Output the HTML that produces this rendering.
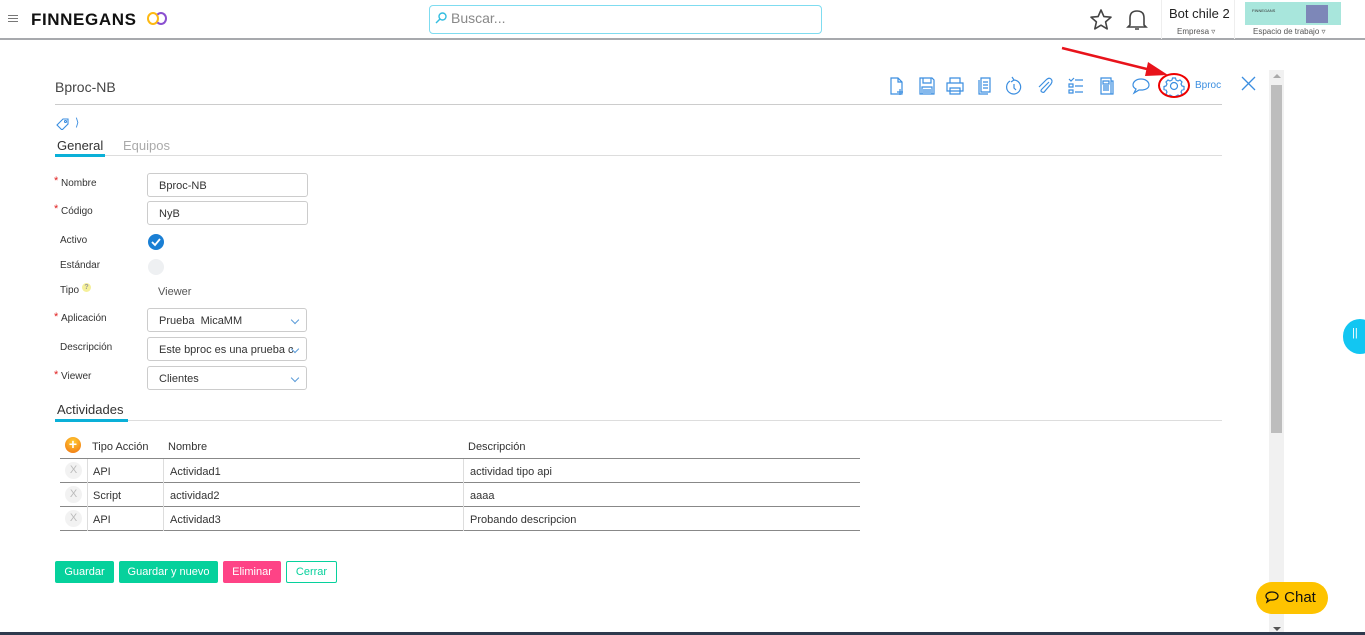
<!DOCTYPE html>
<html><head><meta charset="utf-8">
<style>
*{box-sizing:border-box;margin:0;padding:0}
body{width:1365px;height:635px;overflow:hidden;background:#fff;font-family:"Liberation Sans",sans-serif;position:relative;color:#333}
.a{position:absolute}
.lbl{position:absolute;font-size:10px;color:#333;left:60px}
.req{color:#e02020;position:absolute;left:54px;font-size:11px}
.inp{position:absolute;left:147px;width:161px;height:24px;border:1px solid #ccc;border-radius:3px;font-size:11px;padding:6px 0 0 11px;color:#333}
.sel{position:absolute;left:147px;width:160px;height:24px;border:1px solid #ccc;border-radius:3px;font-size:11px;padding:6px 0 0 11px;color:#333;overflow:hidden;white-space:nowrap}
.sel:after{content:"";position:absolute;right:8px;top:8px;width:5px;height:5px;border-right:1px solid #5a9bd8;border-bottom:1px solid #5a9bd8;transform:rotate(45deg)}
.row{position:absolute;left:60px;width:800px;height:24px;border-bottom:1px solid #888;font-size:11px}
.row span{position:absolute;top:7px}
.x{position:absolute;left:5px;top:3px;width:17px;height:17px;border-radius:50%;background:#f2f2f2;color:#bbb;font-size:11px;text-align:center;line-height:17px}
.btn{position:absolute;top:561px;height:22px;border-radius:2px;color:#fff;font-size:11px;text-align:center;line-height:22px}
.ic{position:absolute;top:76px}
</style></head><body>
<!-- header -->
<div class="a" style="left:0;top:0;width:1365px;height:40px;border-bottom:2px solid #a7a9ad"></div>
<div class="a" style="left:8px;top:15px;width:10px;height:1px;background:#777;box-shadow:0 3px 0 #777,0 6px 0 #777"></div>
<div class="a" style="left:31px;top:10px;font-size:17px;font-weight:bold;letter-spacing:0.6px;color:#111">FINNEGANS</div>
<div class="a" style="left:147px;top:12px;width:12px;height:13px;border-radius:50%;border:2.5px solid #fdb913"></div>
<div class="a" style="left:155px;top:12px;width:12px;height:13px;border-radius:50%;border:2.5px solid #8a4fd0;border-left-color:transparent"></div>
<div class="a" style="left:429px;top:5px;width:393px;height:29px;border:1px solid #7fdcf0;border-radius:4px"></div>
<svg class="a" style="left:434px;top:11px" width="14" height="14"><circle cx="8.5" cy="5.5" r="3.5" fill="none" stroke="#33bde0" stroke-width="1.4"/><path d="M6 8L2 12" stroke="#33bde0" stroke-width="1.4"/></svg>
<div class="a" style="left:451px;top:10px;font-size:14px;color:#888">Buscar...</div>
<svg class="a" style="left:1089px;top:8px" width="24" height="24" viewBox="0 0 24 24"><path d="M12 2l2.9 6.6 7.1.6-5.4 4.7 1.6 7-6.2-3.7-6.2 3.7 1.6-7L2 9.2l7.1-.6z" fill="none" stroke="#444" stroke-width="1.6" stroke-linejoin="round"/></svg>
<svg class="a" style="left:1126px;top:8px" width="22" height="24" viewBox="0 0 22 24"><path d="M4 17 L4 10 Q4 3 11 3 Q18 3 18 10 L18 17 L20 19 L2 19 Z M9 21 L13 21" fill="none" stroke="#444" stroke-width="1.6"/></svg>
<div class="a" style="left:1161px;top:0;width:1px;height:39px;background:#eee"></div>
<div class="a" style="left:1234px;top:0;width:1px;height:39px;background:#eee"></div>
<div class="a" style="left:1169px;top:6px;font-size:13px;color:#222">Bot chile 2</div>
<div class="a" style="left:1177px;top:27px;font-size:8px;color:#555">Empresa ▿</div>
<div class="a" style="left:1245px;top:2px;width:96px;height:23px;background:#a8e6dc"></div>
<div class="a" style="left:1252px;top:8px;font-size:4px;color:#333">FINNEGANS</div>
<div class="a" style="left:1306px;top:5px;width:22px;height:18px;background:#6b5ea8;opacity:.7"></div>
<div class="a" style="left:1253px;top:27px;font-size:8px;color:#555">Espacio de trabajo ▿</div>

<!-- title bar -->
<div class="a" style="left:55px;top:79px;font-size:14px;color:#444">Bproc-NB</div>
<div class="a" style="left:55px;top:104px;width:1167px;height:1px;background:#ccc"></div>
<svg class="ic" style="left:888px" width="18" height="20" viewBox="0 0 18 20" fill="none" stroke="#3b8ee0" stroke-width="1.2"><path d="M3 2h7l4 4v12H3z M10 2v4h4 M12 13v6 M9 16h6"/></svg>
<svg class="ic" style="left:918px" width="18" height="20" viewBox="0 0 18 20" fill="none" stroke="#3b8ee0" stroke-width="1.2"><path d="M2 2h12l2 2v14H2z M5 2v5h8V2 M4 11h10v7H4z M5 14h8 M5 16h8"/></svg>
<svg class="ic" style="left:946px" width="18" height="20" viewBox="0 0 18 20" fill="none" stroke="#3b8ee0" stroke-width="1.2"><path d="M4 2h10v5H4z M1 7h16v8H1z M4 12h10v6H4z"/></svg>
<svg class="ic" style="left:976px" width="18" height="20" viewBox="0 0 18 20" fill="none" stroke="#3b8ee0" stroke-width="1.2"><path d="M5 2h9v14H5z M3 4v14h9 M7 6h5 M7 9h5 M7 12h5"/></svg>
<svg class="ic" style="left:1004px" width="18" height="20" viewBox="0 0 18 20" fill="none" stroke="#3b8ee0" stroke-width="1.2"><path d="M6 5 A7 7 0 1 0 10 4 M8 1 L10 4 L7 6 M10 8v4l2 2"/></svg>
<svg class="ic" style="left:1036px" width="18" height="20" viewBox="0 0 18 20" fill="none" stroke="#3b8ee0" stroke-width="1.2"><path d="M13 6 L6 13 Q4 15 6 16 Q8 17 9 15 L15 8 Q17 5 15 3 Q13 1 10 4 L3 11"/></svg>
<svg class="ic" style="left:1067px" width="18" height="20" viewBox="0 0 18 20" fill="none" stroke="#3b8ee0" stroke-width="1.2"><path d="M2 3l2 2 3-3 M8 4h8 M2 8h4v3H2z M8 10h8 M2 14h4v3H2z M8 16h8"/></svg>
<svg class="ic" style="left:1098px" width="18" height="20" viewBox="0 0 18 20" fill="none" stroke="#3b8ee0" stroke-width="1.2"><path d="M3 2h10v16H3z M13 5h2v13H5 M5 5h6v3H5z M5 10h6 M5 12h6 M5 14h6"/></svg>
<svg class="ic" style="left:1131px" width="20" height="20" viewBox="0 0 20 20" fill="none" stroke="#3b8ee0" stroke-width="1.2"><path d="M10 3C5 3 2 6 2 9c0 2 1 3 3 4l-2 4 5-3c1 0 1 0 2 0 5 0 8-2 8-5s-3-6-8-6z"/></svg>
<svg class="a" style="left:1163px;top:75px" width="22" height="22" viewBox="0 0 22 22" fill="none" stroke="#3b8ee0" stroke-width="1.2"><circle cx="11" cy="11" r="3.5"/><path d="M9.5 3h3l.5 2 2 1 2-1 2 2-1 2 1 2 2 .5v3l-2 .5-1 2 1 2-2 2-2-1-2 1-.5 2h-3l-.5-2-2-1-2 1-2-2 1-2-1-2-2-.5v-3l2-.5 1-2-1-2 2-2 2 1 2-1z"/></svg>
<div class="a" style="left:1158px;top:73px;width:32px;height:25px;border:2.5px solid #e00;border-radius:50%"></div>
<svg class="a" style="left:1060px;top:45px" width="110" height="35"><path d="M2 3 L95 26" stroke="#e8131b" stroke-width="2.5"/><path d="M108 30 L88 17 L85 31z" fill="#e8131b"/></svg>
<div class="a" style="left:1195px;top:80px;font-size:10px;color:#3b8ee0">Bproc</div>
<svg class="a" style="left:1241px;top:76px" width="15" height="15"><path d="M1 1L14 14M14 1L1 14" stroke="#3b8ee0" stroke-width="1.3"/></svg>

<!-- tags/tabs -->
<svg class="a" style="left:56px;top:118px" width="14" height="12" viewBox="0 0 14 12" fill="none" stroke="#3b8ee0" stroke-width="1.1"><path d="M1 7L7 1h5v5L6 12z"/><circle cx="9.5" cy="3.5" r="1"/></svg>
<div class="a" style="left:75px;top:116px;font-size:11px;color:#3b8ee0">⟩</div>
<div class="a" style="left:57px;top:138px;font-size:13px;color:#333">General</div>
<div class="a" style="left:123px;top:138px;font-size:13px;color:#aaa">Equipos</div>
<div class="a" style="left:55px;top:155px;width:1167px;height:1px;background:#ddd"></div>
<div class="a" style="left:55px;top:154px;width:50px;height:3px;background:#0ab0d8"></div>

<!-- form -->
<span class="req" style="top:175px">*</span><div class="lbl" style="top:178px;left:61px">Nombre</div>
<div class="inp" style="top:173px">Bproc-NB</div>
<span class="req" style="top:203px">*</span><div class="lbl" style="top:206px;left:61px">Código</div>
<div class="inp" style="top:201px">NyB</div>
<div class="lbl" style="top:235px">Activo</div>
<div class="a" style="left:148px;top:234px;width:16px;height:16px;border-radius:50%;background:#1a7fd4"></div>
<svg class="a" style="left:148px;top:234px" width="16" height="16"><path d="M4 8l3 3 5-6" fill="none" stroke="#fff" stroke-width="1.8"/></svg>
<div class="lbl" style="top:260px">Estándar</div>
<div class="a" style="left:148px;top:259px;width:16px;height:16px;border-radius:50%;background:#eef0f2"></div>
<div class="lbl" style="top:285px">Tipo</div>
<div class="a" style="left:82px;top:283px;width:9px;height:9px;border-radius:50%;background:#f5f09a;color:#999;font-size:7px;text-align:center;line-height:9px;font-weight:bold">?</div>
<div class="a" style="left:158px;top:286px;font-size:11px;color:#555">Viewer</div>
<span class="req" style="top:311px">*</span><div class="lbl" style="top:313px;left:61px">Aplicación</div>
<div class="sel" style="top:308px">Prueba&nbsp; MicaMM</div>
<div class="lbl" style="top:342px">Descripción</div>
<div class="sel" style="top:337px;padding-right:26px">Este bproc es una prueba c</div>
<span class="req" style="top:369px">*</span><div class="lbl" style="top:371px;left:61px">Viewer</div>
<div class="sel" style="top:366px">Clientes</div>

<!-- actividades -->
<div class="a" style="left:57px;top:402px;font-size:13px;color:#333">Actividades</div>
<div class="a" style="left:55px;top:420px;width:1167px;height:1px;background:#ddd"></div>
<div class="a" style="left:55px;top:419px;width:73px;height:3px;background:#0ab0d8"></div>
<div class="a" style="left:65px;top:437px;width:16px;height:16px;border-radius:50%;background:radial-gradient(circle at 50% 30%,#ffcc33,#f07010);color:#fff;font-size:14px;line-height:15px;text-align:center;font-weight:bold">+</div>
<div class="a" style="left:92px;top:441px;font-size:11px">Tipo Acción</div>
<div class="a" style="left:168px;top:441px;font-size:11px">Nombre</div>
<div class="a" style="left:468px;top:441px;font-size:11px">Descripción</div>
<div class="a" style="left:60px;top:458px;width:800px;height:1px;background:#888"></div>
<div class="row" style="top:459px"><div class="x">X</div><span style="left:33px">API</span><span style="left:110px">Actividad1</span><span style="left:410px">actividad tipo api</span></div>
<div class="row" style="top:483px"><div class="x">X</div><span style="left:33px">Script</span><span style="left:110px">actividad2</span><span style="left:410px">aaaa</span></div>
<div class="row" style="top:507px"><div class="x">X</div><span style="left:33px">API</span><span style="left:110px">Actividad3</span><span style="left:410px">Probando descripcion</span></div>
<div class="a" style="left:87px;top:459px;width:1px;height:72px;background:#ddd"></div>
<div class="a" style="left:163px;top:459px;width:1px;height:72px;background:#ddd"></div>
<div class="a" style="left:463px;top:459px;width:1px;height:72px;background:#ddd"></div>

<!-- buttons -->
<div class="btn" style="left:55px;width:59px;background:#06d19c">Guardar</div>
<div class="btn" style="left:119px;width:99px;background:#06d19c">Guardar y nuevo</div>
<div class="btn" style="left:223px;width:58px;background:#fe4386">Eliminar</div>
<div class="btn" style="left:286px;width:51px;border:1px solid #06d19c;color:#06d19c;line-height:20px">Cerrar</div>

<!-- scrollbar -->
<div class="a" style="left:1269px;top:70px;width:15px;height:565px;background:#f1f1f1"></div>
<div class="a" style="left:1271px;top:85px;width:11px;height:348px;background:#bdbdbd"></div>
<div class="a" style="left:1273px;top:74px;width:0;height:0;border-left:4px solid transparent;border-right:4px solid transparent;border-bottom:4px solid #aaa"></div>
<div class="a" style="left:1273px;top:627px;width:0;height:0;border-left:4px solid transparent;border-right:4px solid transparent;border-top:4px solid #555"></div>

<div class="a" style="left:1343px;top:319px;width:34px;height:35px;border-radius:17px;background:#12c6f2;color:#fff;font-size:11px;padding:8px 0 0 9px">||</div>
<div class="a" style="left:1256px;top:582px;width:72px;height:32px;border-radius:16px;background:#fec300;font-size:15px;color:#111;padding:7px 0 0 8px">
<svg width="16" height="14" viewBox="0 0 16 14" style="vertical-align:-2px"><path d="M8 2C4 2 2 4 2 6c0 1.5 1 2.5 2 3l-1 3 3-2h2c4 0 6-2 6-4S12 2 8 2z" fill="none" stroke="#111" stroke-width="1.3"/></svg> Chat</div>
<div class="a" style="left:0;top:632px;width:1365px;height:3px;background:#2f3a4e"></div>
</body></html>
